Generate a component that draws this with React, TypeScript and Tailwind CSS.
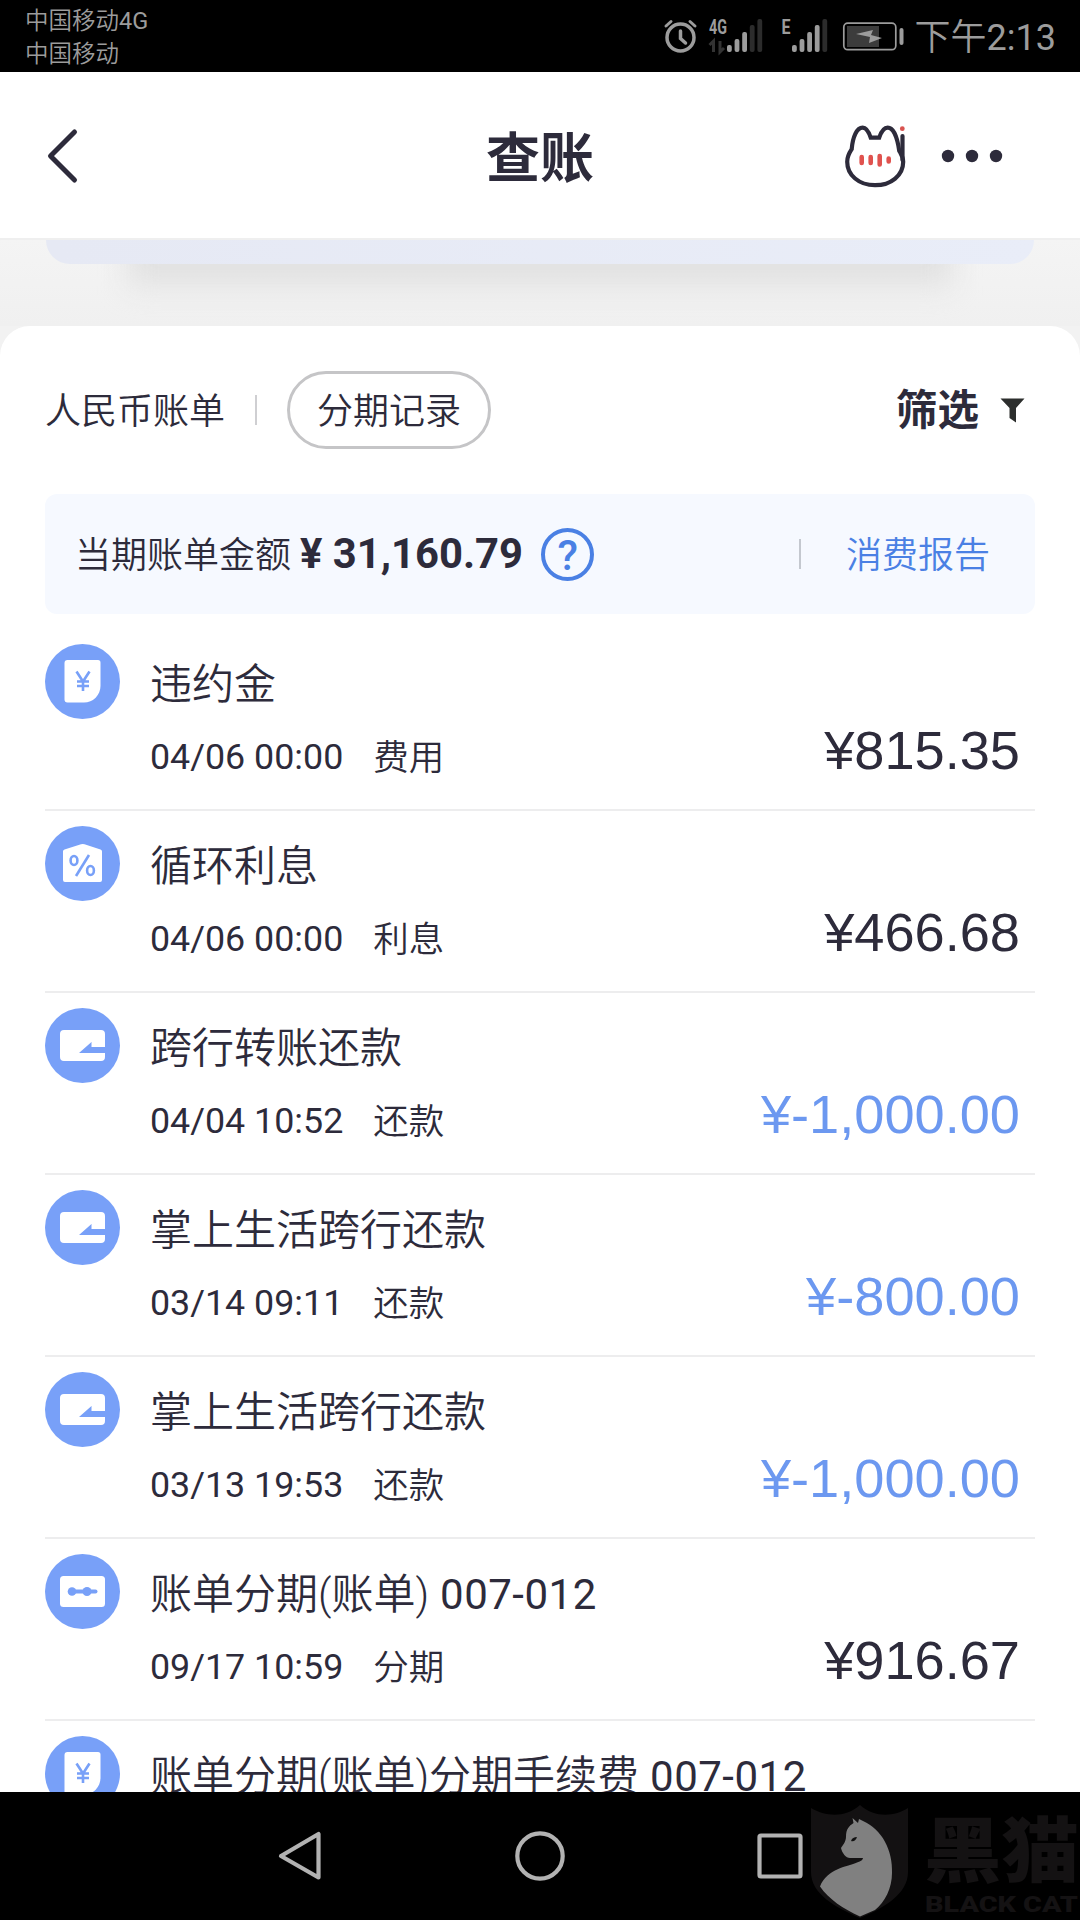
import React from 'react';

type IconKind = 'fee' | 'interest' | 'repay' | 'installment';

interface Bill {
  id: number;
  icon: IconKind;
  title: string;
  suffix?: string;
  time: string;
  category: string;
  amount: string;
  income?: boolean;
}

const bills: Bill[] = [
  { id: 1, icon: 'fee', title: '违约金', time: '04/06 00:00', category: '费用', amount: '¥815.35' },
  { id: 2, icon: 'interest', title: '循环利息', time: '04/06 00:00', category: '利息', amount: '¥466.68' },
  { id: 3, icon: 'repay', title: '跨行转账还款', time: '04/04 10:52', category: '还款', amount: '¥-1,000.00', income: true },
  { id: 4, icon: 'repay', title: '掌上生活跨行还款', time: '03/14 09:11', category: '还款', amount: '¥-800.00', income: true },
  { id: 5, icon: 'repay', title: '掌上生活跨行还款', time: '03/13 19:53', category: '还款', amount: '¥-1,000.00', income: true },
  { id: 6, icon: 'installment', title: '账单分期(账单)', suffix: '007-012', time: '09/17 10:59', category: '分期', amount: '¥916.67' },
  { id: 7, icon: 'fee', title: '账单分期(账单)分期手续费', suffix: '007-012', time: '', category: '', amount: '' },
];

function BillIcon({ kind }: { kind: IconKind }) {
  return (
    <svg viewBox="0 0 75 75" className="w-[75px] h-[75px] shrink-0">
      <circle cx="37.5" cy="37.5" r="37.5" fill="#78a0f8" />
      {kind === 'fee' && (
        <>
          <path d="M22.500 16H53a2.500 2.500 0 0 1 2.500 2.500V42a16.500 16.500 0 0 1-16.500 16.500H22.500a3 3 0 0 1-3-3V19a3 3 0 0 1 3-3Z" fill="#fff" />
          <path d="m31.500 27.500 6.500 10 6.500-10M38 37.500v9.500M32 37.500h12M32 42h12" fill="none" stroke="#78a0f8" strokeWidth="2.600" />
        </>
      )}
      {kind === 'interest' && (
        <>
          <path d="M18 25.500a2 2 0 0 1 1.500-2L36 18.300a5 5 0 0 1 3.500 0L55.500 23.500a2 2 0 0 1 1.500 2V54a2 2 0 0 1-2 2H20a2 2 0 0 1-2-2Z" fill="#fff" />
          <g fill="none" stroke="#78a0f8" strokeWidth="2.600">
            <ellipse cx="29" cy="34.500" rx="3.400" ry="4.500" />
            <ellipse cx="45.500" cy="44.500" rx="3.400" ry="4.500" />
            <path d="M44 29 31 50" />
          </g>
        </>
      )}
      {kind === 'repay' && (
        <path d="M19 22H56a4 4 0 0 1 4 4V39H46.500V34L34 45H60V49a4 4 0 0 1-4 4H19a4 4 0 0 1-4-4V26a4 4 0 0 1 4-4Z" fill="#fff" />
      )}
      {kind === 'installment' && (
        <>
          <rect x="15" y="22" width="45" height="31" rx="3.500" fill="#fff" />
          <circle cx="27" cy="37.500" r="4.300" fill="#78a0f8" />
          <circle cx="42" cy="37.500" r="4.500" fill="#78a0f8" />
          <path d="M28 37.500H50.500" stroke="#78a0f8" strokeWidth="4" strokeLinecap="round" />
        </>
      )}
    </svg>
  );
}

function Signal({ active, x }: { active: number; x: number }) {
  const heights = [7, 13, 20, 27, 33];
  return (
    <>
      {heights.map((h, i) => (
        <rect key={h} x={x + i * 7.6} y={52 - h} width="4.800" height={h} rx="2" fill={i < active ? '#9c9c9c' : '#2c2c2c'} />
      ))}
    </>
  );
}

function StatusBar() {
  return (
    <div className="h-[72px] shrink-0 bg-black flex items-center justify-between text-[#9c9c9c]">
      <div className="pl-[25px] pt-[3px] text-[23.500px] leading-[33px] font-[350]">
        <div>中国移动<span className="font-normal">4G</span></div>
        <div>中国移动</div>
      </div>
      <div className="flex items-center pr-6">
        <svg viewBox="664 0 244 72" className="w-[244px] h-[72px]">
          <g fill="none" stroke="#9c9c9c" strokeLinecap="round">
            <circle cx="681.500" cy="37.500" r="13.500" strokeWidth="3.500" />
            <path d="M681.500 31v7.500l5 4.500" strokeWidth="3.500" />
            <path d="m667 26 5-4.500M696 26l-5-4.500" strokeWidth="3" />
          </g>
          <text x="710" y="33.500" fontSize="20" fontWeight="700" fill="#9c9c9c" textLength="18" lengthAdjust="spacingAndGlyphs">4G</text>
          <path d="M710.500 45l4-4v11M721 41v11l4-4" fill="none" stroke="#333" strokeWidth="3" />
          <Signal active={3} x={728} />
          <text x="782.500" y="33.500" fontSize="21" fontWeight="700" fill="#9c9c9c" textLength="9" lengthAdjust="spacingAndGlyphs">E</text>
          <Signal active={4} x={793} />
          <rect x="844.800" y="23.200" width="52" height="26.500" rx="4" fill="none" stroke="#9c9c9c" strokeWidth="1.700" />
          <rect x="848" y="26" width="32" height="21" fill="#3c3c3c" />
          <path d="m857 34 17-4-2 5 11 3-13 5 1-6Z" fill="#9c9c9c" />
          <rect x="900.500" y="28" width="4" height="17" rx="2" fill="#9c9c9c" />
        </svg>
        <span className="ml-2 pt-1 text-[36px] leading-[68px] font-[350] whitespace-nowrap">下午<span className="font-normal">2:13</span></span>
      </div>
    </div>
  );
}

function Header() {
  return (
    <header className="h-[168px] shrink-0 bg-white border-b-2 border-[#efefef] grid grid-cols-[1fr_auto_1fr] items-center text-[#2d2b3b]">
      <svg viewBox="0 0 40 60" className="w-10 h-[60px] ml-[43px] mt-[2px]">
        <path d="M31.500 6 7.500 30l24 24" fill="none" stroke="currentColor" strokeWidth="5" strokeLinecap="round" strokeLinejoin="round" />
      </svg>
      <h1 className="text-[54px] leading-[80px] pt-[9px] font-bold">查账</h1>
      <div className="flex items-center justify-end pr-[77px] pt-[2px]">
        <svg viewBox="840 120 70 75" className="w-[70px] h-[75px]">
          <path d="M875 186.200c-16 0-27.800-10-27.800-23.500 0-4.500 1.500-8 4.500-12.500 1-12 5-21.500 11-21.500 4 0 6 4 8 10h8.500c2-6 4.500-10 8.500-10 5.500 0 9.500 9 11.500 23 2.500 4.500 4 6.500 4 11 0 13.500-12 23.500-28.200 23.500Z" fill="none" stroke="currentColor" strokeWidth="4.200" />
          <path d="M902.500 137v24" stroke="currentColor" strokeWidth="4.200" strokeLinecap="round" />
          <circle cx="902.300" cy="129.700" r="2.400" fill="#d9534f" />
          <g stroke="#e0524e" strokeWidth="4.600" strokeLinecap="round">
            <path d="M861.700 158v6M870.700 158v6M879.700 157v8.500M888.700 159.500v3" />
          </g>
        </svg>
        <svg viewBox="0 0 62 14" className="w-[62px] h-[14px] ml-[31px]">
          <circle cx="7" cy="7" r="6.200" fill="currentColor" />
          <circle cx="31" cy="7" r="6.200" fill="currentColor" />
          <circle cx="55" cy="7" r="6.200" fill="currentColor" />
        </svg>
      </div>
    </header>
  );
}

function BillRow({ bill }: { bill: Bill }) {
  return (
    <li className="h-[182px] shrink-0 border-b-2 border-[#ededee] flex items-start pt-[15px] pr-[15px]">
      <BillIcon kind={bill.icon} />
      <div className="ml-[30px] pt-[11px]">
        <div className="text-[42px] leading-[60px] whitespace-nowrap">
          {bill.title}
          {bill.suffix && <span className="font-normal tracking-[0.5px]"> {bill.suffix}</span>}
        </div>
        <div className="mt-3 flex text-[35.800px] leading-[60px] whitespace-nowrap">
          <span className="font-normal">{bill.time}</span>
          <span className="ml-[30px] pt-px text-[35.500px]">{bill.category}</span>
        </div>
      </div>
      <span className={`ml-auto mt-[76px] text-[54.200px] leading-[60px] font-normal font-['Liberation_Sans',sans-serif] whitespace-nowrap ${bill.income ? 'text-[#6c98f0]' : ''}`}>
        {bill.amount}
      </span>
    </li>
  );
}

function BlackCatMark() {
  return (
    <svg viewBox="811 1804 269 116" className="absolute left-[811px] top-[12px] w-[269px] h-[116px]">
      <path d="M811 1808c14 8 33 11 49-3 16 14 35 11 48 3v64c0 22-24 36-48 46-25-11-49-24-49-46Z" fill="#131112" />
      <path d="M852.500 1818l5.500 5 1-4 4 2c19 8 30 30 29 52 0 15-7 29-17 37l-15 6.500c-17-8-31-17-40-30 7-18 28-20 37-24 4-1 6-3 6-4.500h-13c-4 0-8-5-9-10 1-2 5-6 5-11 0-8 3-11 7.500-14Z" fill="#808080" />
      <path d="M851 1841c1-3 3-4 6-4-1 3-3 5-6 4Z" fill="#111" />
      <g fill="#141213" fontWeight="900">
        <text x="924" y="1876" fontSize="71" textLength="155" lengthAdjust="spacingAndGlyphs">黑猫</text>
        <text x="925" y="1912" fontSize="22" textLength="153" lengthAdjust="spacingAndGlyphs">BLACK CAT</text>
      </g>
    </svg>
  );
}

function NavBar() {
  return (
    <nav className="relative h-32 shrink-0 overflow-hidden bg-black">
      <svg viewBox="0 0 1080 128" className="w-[1080px] h-32">
        <g fill="none" stroke="#b2b2b2" strokeWidth="4.200" strokeLinejoin="round">
          <path d="M318.500 42v43.500L281 64Z" />
          <circle cx="540" cy="64" r="22.700" />
          <rect x="759.500" y="43.500" width="41" height="41" rx="1.500" />
        </g>
      </svg>
      <BlackCatMark />
    </nav>
  );
}

export default function App() {
  return (
    <div className="w-[1080px] h-[1920px] overflow-hidden flex flex-col bg-[#f2f2f2] text-[#2d2b3b] font-[350] font-['Roboto','Noto_Sans_CJK_SC',sans-serif]">
      <StatusBar />
      <Header />

      {/* bottom edge of the bill card scrolled under the header */}
      <div className="relative h-[86px] shrink-0 overflow-hidden px-[46px] bg-linear-to-b from-[#f4f4f4] to-[#f0f0f0]">
        <div className="absolute left-[128px] right-[128px] top-[-10px] h-[56px] bg-[#e1e1e1] blur-[14px]" />
        <div className="relative h-6 rounded-b-[28px] bg-linear-to-r from-[#e6e9f4] to-[#e9edf8]" />
      </div>

      <section className="flex-1 min-h-0 overflow-hidden bg-white rounded-t-[30px] px-[45px] flex flex-col">
        <div className="h-[168px] shrink-0 flex items-center text-[36px]">
          <span className="pt-[3px]">人民币账单</span>
          <span className="w-[2px] h-[30px] bg-[#cfcfd2] ml-[30px]" />
          <button className="ml-[30px] w-[204px] h-[78px] pt-1 rounded-full border-3 border-[#c5c5c7] leading-none">分期记录</button>
          <div className="ml-auto pr-[10px] flex items-center gap-[21px]">
            <span className="pt-[3px] text-[41.500px] font-bold">筛选</span>
            <svg viewBox="0 0 25 25" className="w-[25px] h-[25px]">
              <path d="M.5.5h24L16 10v14.500L9.500 20V10Z" fill="#2c2e2d" />
            </svg>
          </div>
        </div>

        <div className="h-[120px] shrink-0 rounded-[12px] bg-[#f6f9ff] flex items-center pl-[30px] pr-[45px] text-[36px]">
          <span className="pt-[3px]">当期账单金额</span>
          <span className="ml-[9px] text-[41.800px] font-bold">¥ 31,160.79</span>
          <span className="ml-[18px] w-[53px] h-[53px] rounded-full border-4 border-[#4a80e4] text-[#4a80e4] text-[42px] leading-none font-medium flex items-center justify-center pt-[3px]">?</span>
          <span className="ml-auto w-[2px] h-[30px] bg-[#c4c8cf]" />
          <span className="ml-[45px] pt-[3px] text-[#4a80e4]">消费报告</span>
        </div>

        <ul className="mt-[15px] flex flex-col">
          {bills.map((bill) => (
            <BillRow key={bill.id} bill={bill} />
          ))}
        </ul>
      </section>

      <NavBar />
    </div>
  );
}
